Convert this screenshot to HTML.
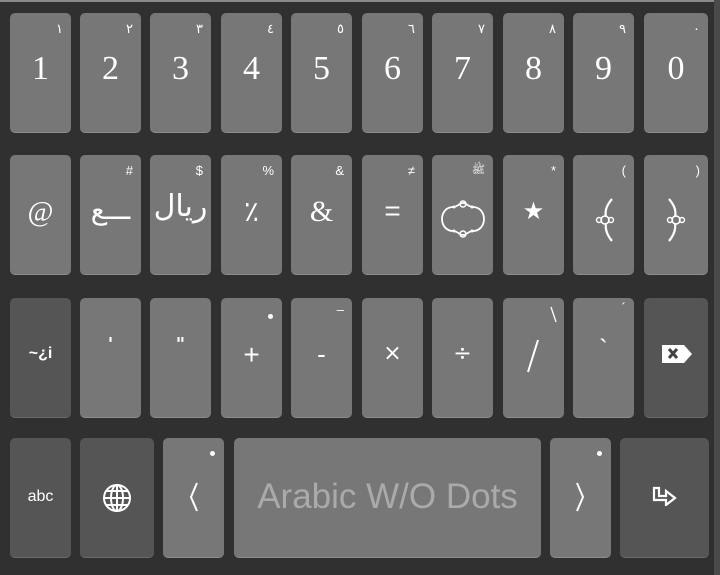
<!DOCTYPE html>
<html><head><meta charset="utf-8"><style>
*{margin:0;padding:0;box-sizing:border-box}
html,body{width:720px;height:575px;overflow:hidden;background:#303030;font-family:"Liberation Serif",serif}
.top{position:absolute;left:0;top:0;width:720px;height:2px;background:#8a8a8a}
.rs{position:absolute;right:0;top:0;width:6px;height:575px;background:#4a4a4a}
.k{position:absolute;width:61px;height:120px;background:#777;border-radius:5px;border-bottom:1px solid #8c8c8c;color:#fff;overflow:hidden}
.d{background:#555;border-bottom-color:#6a6a6a}
.m{position:absolute;left:0;right:0;text-align:center}
.s{position:absolute;right:8px;top:8px;font-size:13px;color:#fff;font-family:"Liberation Sans","DejaVu Sans",sans-serif}
.n{font-size:34px;top:37px}
.dot{position:absolute;right:9px;top:13px;width:5px;height:5px;border-radius:50%;background:#fff}
svg{position:absolute}
</style></head><body>
<div class="top"></div><div class="rs"></div>

<!-- row1 -->
<div class="k" style="left:10px;top:13px"><div class="s">١</div><div class="m n">1</div></div>
<div class="k" style="left:80px;top:13px"><div class="s">٢</div><div class="m n">2</div></div>
<div class="k" style="left:150px;top:13px"><div class="s">٣</div><div class="m n">3</div></div>
<div class="k" style="left:221px;top:13px"><div class="s">٤</div><div class="m n">4</div></div>
<div class="k" style="left:291px;top:13px"><div class="s">٥</div><div class="m n">5</div></div>
<div class="k" style="left:362px;top:13px"><div class="s">٦</div><div class="m n">6</div></div>
<div class="k" style="left:432px;top:13px"><div class="s">٧</div><div class="m n">7</div></div>
<div class="k" style="left:503px;top:13px"><div class="s">٨</div><div class="m n">8</div></div>
<div class="k" style="left:573px;top:13px"><div class="s">٩</div><div class="m n">9</div></div>
<div class="k" style="left:644px;top:13px;width:64px"><div class="s">٠</div><div class="m n">0</div></div>

<!-- row2 -->
<div class="k" style="left:10px;top:155px"><div class="m" style="top:42px;font-size:28px">@</div></div>
<div class="k" style="left:80px;top:155px"><div class="s">#</div><div class="m" style="top:38px;font-size:28px;font-family:'Liberation Serif','DejaVu Sans',serif">ـــع</div></div>
<div class="k" style="left:150px;top:155px"><div class="s">$</div><div class="m" style="top:34px;font-size:30px;font-family:'DejaVu Sans',sans-serif">ريال</div></div>
<div class="k" style="left:221px;top:155px"><div class="s">%</div><div class="m" style="top:40px;font-size:28px;font-family:'DejaVu Sans',sans-serif">٪</div></div>
<div class="k" style="left:291px;top:155px"><div class="s">&amp;</div><div class="m" style="top:40px;font-size:30px">&amp;</div></div>
<div class="k" style="left:362px;top:155px"><div class="s">≠</div><div class="m" style="top:40px;font-size:28px;font-family:'Liberation Sans',sans-serif">=</div></div>
<div class="k" style="left:432px;top:155px"><div class="s" style="font-size:11px">ﷺ</div>
<svg style="left:8px;top:44px" width="46" height="40" viewBox="0 0 46 40"><path d="M23 4C19 4 18 8 13 8C6 8 2 14 2 20C2 26 6 32 13 32C18 32 19 36 23 36C27 36 28 32 33 32C40 32 44 26 44 20C44 14 40 8 33 8C28 8 27 4 23 4Z" fill="none" stroke="#fff" stroke-width="1.8"/><circle cx="23" cy="5" r="3" fill="none" stroke="#fff" stroke-width="1.5"/><circle cx="23" cy="35" r="3" fill="none" stroke="#fff" stroke-width="1.5"/><circle cx="14" cy="8" r="1.5" fill="#fff"/><circle cx="32" cy="8" r="1.5" fill="#fff"/><circle cx="14" cy="32" r="1.5" fill="#fff"/><circle cx="32" cy="32" r="1.5" fill="#fff"/></svg></div>
<div class="k" style="left:503px;top:155px"><div class="s">*</div><div class="m" style="top:42px;font-size:24px;font-family:'DejaVu Sans',sans-serif">★</div></div>
<div class="k" style="left:573px;top:155px"><div class="s">(</div>
<svg style="left:20px;top:42px" width="24" height="46" viewBox="0 0 24 46"><path d="M19 2C12 10 12 16 13 20M13 26C12 32 14 38 19 44" fill="none" stroke="#fff" stroke-width="2.2"/><circle cx="12" cy="23" r="4" fill="none" stroke="#fff" stroke-width="1.6"/><circle cx="6" cy="23" r="2.5" fill="none" stroke="#fff" stroke-width="1.4"/><circle cx="18" cy="23" r="2.5" fill="none" stroke="#fff" stroke-width="1.4"/></svg></div>
<div class="k" style="left:644px;top:155px;width:64px"><div class="s">)</div>
<svg style="left:20px;top:42px" width="24" height="46" viewBox="0 0 24 46"><path d="M5 2C12 10 12 16 11 20M11 26C12 32 10 38 5 44" fill="none" stroke="#fff" stroke-width="2.2"/><circle cx="12" cy="23" r="4" fill="none" stroke="#fff" stroke-width="1.6"/><circle cx="6" cy="23" r="2.5" fill="none" stroke="#fff" stroke-width="1.4"/><circle cx="18" cy="23" r="2.5" fill="none" stroke="#fff" stroke-width="1.4"/></svg></div>

<!-- row3 -->
<div class="k d" style="left:10px;top:298px"><div class="m" style="top:47px;font-size:16px;font-family:'Liberation Sans',sans-serif;font-weight:bold">~¿i</div></div>
<div class="k" style="left:80px;top:298px"><div class="m" style="top:36px;font-size:18px;font-family:'DejaVu Sans',sans-serif;font-weight:bold">'</div></div>
<div class="k" style="left:150px;top:298px"><div class="m" style="top:36px;font-size:18px;font-family:'DejaVu Sans',sans-serif;font-weight:bold">"</div></div>
<div class="k" style="left:221px;top:298px"><div class="dot" style="top:16px"></div><div class="m" style="top:41px;font-size:28px;font-family:'Liberation Sans',sans-serif">+</div></div>
<div class="k" style="left:291px;top:298px"><div class="s" style="top:4px">–</div><div class="m" style="top:41px;font-size:26px;font-family:'Liberation Sans',sans-serif">-</div></div>
<div class="k" style="left:362px;top:298px"><div class="m" style="top:43px;font-size:22px;font-family:'DejaVu Sans',sans-serif">×</div></div>
<div class="k" style="left:432px;top:298px"><div class="m" style="top:43px;font-size:22px;font-family:'DejaVu Sans',sans-serif">÷</div></div>
<div class="k" style="left:503px;top:298px"><svg style="left:46px;top:8px" width="10" height="18"><path d="M2 1L7 16" stroke="#fff" stroke-width="1.3"/></svg><svg style="left:22px;top:40px" width="16" height="36"><path d="M13 2L3 34" stroke="#fff" stroke-width="2"/></svg></div>
<div class="k" style="left:573px;top:298px"><div class="s" style="top:2px">´</div><div class="m" style="top:36px;font-size:26px;font-family:'Liberation Sans',sans-serif">`</div></div>
<div class="k d" style="left:644px;top:298px;width:64px">
<svg style="left:16px;top:45px" width="34" height="22" viewBox="0 0 34 22"><path d="M2 2H24L32 11L24 20H2Z" fill="#fff"/><path d="M9 6L17 15M17 6L9 15" stroke="#444" stroke-width="3"/></svg></div>

<!-- row4 -->
<div class="k d" style="left:10px;top:438px"><div class="m" style="top:50px;font-size:16px;font-family:'Liberation Sans',sans-serif">abc</div></div>
<div class="k d" style="left:80px;top:438px;width:74px">
<svg style="left:22px;top:45px" width="30" height="30" viewBox="0 0 30 30"><g fill="none" stroke="#fff" stroke-width="2"><circle cx="15" cy="15" r="13"/><ellipse cx="15" cy="15" rx="6" ry="13"/><path d="M15 2V28M2 15H28M4 8H26M4 22H26"/></g></svg></div>
<div class="k" style="left:163px;top:438px"><div class="dot"></div><svg style="left:25px;top:43px" width="12" height="32"><path d="M9 2L3 16L9 30" fill="none" stroke="#fff" stroke-width="2"/></svg></div>
<div class="k" style="left:234px;top:438px;width:307px"><div class="m" style="top:39px;font-size:35px;font-family:'Liberation Sans',sans-serif;color:#aaa">Arabic W/O Dots</div></div>
<div class="k" style="left:550px;top:438px"><div class="dot"></div><svg style="left:24px;top:43px" width="12" height="32"><path d="M3 2L9 16L3 30" fill="none" stroke="#fff" stroke-width="2"/></svg></div>
<div class="k d" style="left:620px;top:438px;width:89px">
<svg style="left:32px;top:48px" width="26" height="20" viewBox="0 0 26 20"><path d="M2 2H7V10H14V5L23 12L14 19V14H2Z" fill="none" stroke="#fff" stroke-width="2.2" stroke-linejoin="miter"/></svg></div>
</body></html>
